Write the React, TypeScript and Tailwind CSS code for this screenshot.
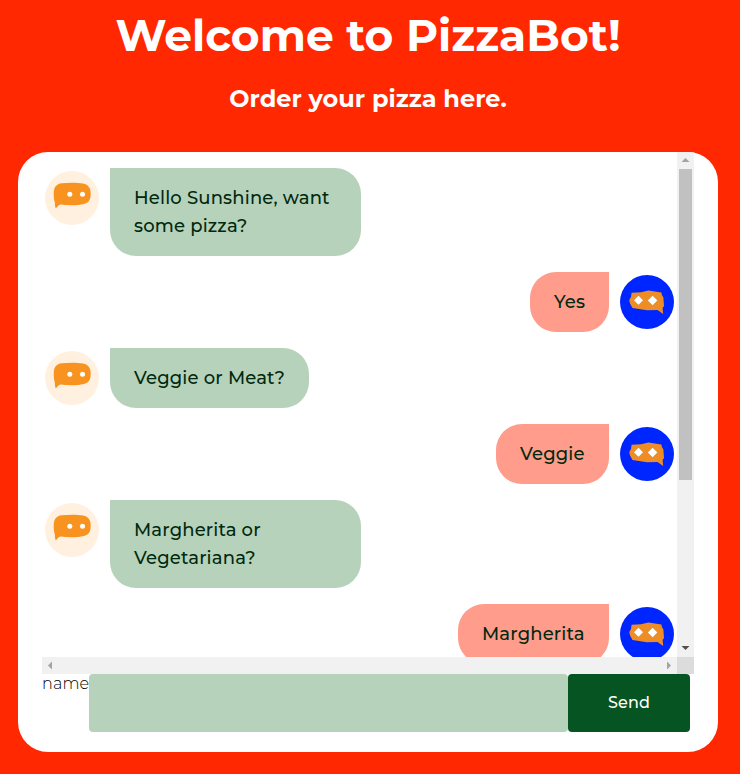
function BotAvatar() {
  return (
    <svg viewBox="0 0 60 60" className="size-[60px] shrink-0">
      <circle cx="30" cy="30" r="27" fill="#fff0e0" />
      <path
        d="M20 15.2C27 14.4 36 14.4 41 15.6C46.5 17 48.7 20 48.7 25.5C48.7 31 47.5 34.5 42 36C36 37.6 26 37.6 18.5 36.6C16.5 37 16 38.6 13.8 40.3C12.8 38.5 13 36.5 12.9 34.5C11.8 31.5 11.6 28 11.8 24.5C12 19.5 14 15.8 20 15.2Z"
        fill="#f7931e"
      />
      <circle cx="27.8" cy="26.2" r="2.5" fill="#fff" />
      <circle cx="40.5" cy="26.2" r="2.5" fill="#fff" />
    </svg>
  );
}

function UserAvatar() {
  return (
    <svg viewBox="0 0 60 60" className="size-[60px] shrink-0">
      <circle cx="30" cy="30" r="27" fill="#0026ff" />
      <path
        d="M14.6 20.8L24 20.2L31.5 18.6L44.4 20.6L44.9 23L46.4 25.4L47 34L45.6 36L46.2 42L40.5 37.9L30 38.2L15.5 36L13 31.5L12.3 28L14 25Z"
        fill="#ee8d26"
      />
      <path d="M21.5 23.8L26 28.3L21.5 32.8L17 28.3ZM35.6 23.8L40.3 28.5L35.6 33.2L30.9 28.5Z" fill="#fff" />
    </svg>
  );
}

type Message = { from: "bot" | "user"; text: string; width: string };

const messages: Message[] = [
  { from: "bot", text: "Hello Sunshine, want some pizza?", width: "w-[251px]" },
  { from: "user", text: "Yes", width: "w-[79px]" },
  { from: "bot", text: "Veggie or Meat?", width: "w-[199px]" },
  { from: "user", text: "Veggie", width: "w-[113px]" },
  { from: "bot", text: "Margherita or Vegetariana?", width: "w-[251px]" },
  { from: "user", text: "Margherita", width: "w-[151px]" },
];

function MessageRow({ message }: { message: Message }) {
  const bot = message.from === "bot";
  return (
    <div className={`flex shrink-0 items-start gap-2 ${bot ? "" : "flex-row-reverse"}`}>
      {bot ? <BotAvatar /> : <UserAvatar />}
      <p
        className={`py-4 pr-5 pl-6 text-[18px] leading-7 font-medium tracking-[0.17px] text-[#00290f] ${message.width} ${
          bot ? "rounded-[26px] rounded-tl-none bg-[#b7d2bb]" : "rounded-[26px] rounded-tr-none bg-[#ff9c8b]"
        }`}
      >
        {message.text}
      </p>
    </div>
  );
}

function Arrow({ points, color }: { points: string; color: string }) {
  return (
    <svg viewBox="0 0 17 17" className="size-[17px] shrink-0">
      <polygon points={points} fill={color} />
    </svg>
  );
}

export default function App() {
  return (
    <main className="h-[774px] w-[740px] overflow-hidden bg-[#ff2800] font-['Montserrat','Inter',sans-serif]">
      <header className="flex h-[152px] w-[736px] flex-col items-center text-white">
        <h1 className="mt-[5px] text-[44px] leading-[60px] font-bold">Welcome to PizzaBot!</h1>
        <h2 className="mt-[18px] text-[24px] leading-8 font-bold">Order your pizza here.</h2>
      </header>
      <section className="ml-[18px] h-[600px] w-[700px] overflow-hidden rounded-[30px] bg-white px-6">
        <div className="flex h-[505px]">
          <div className="flex w-[635px] flex-col gap-4 overflow-hidden pt-4">
            {messages.map((m, i) => (
              <MessageRow key={i} message={m} />
            ))}
          </div>
          <div className="flex w-[17px] flex-col items-center bg-[#f1f1f1]">
            <Arrow points="8.5,6 12.5,10 4.5,10" color="#a3a3a3" />
            <div className="h-[311px] w-[13px] bg-[#c1c1c1]" />
            <div className="grow" />
            <Arrow points="4.5,6 12.5,6 8.5,10" color="#505050" />
          </div>
        </div>
        <div className="flex h-[17px] bg-[#f1f1f1]">
          <Arrow points="10,4.5 10,12.5 6,8.5" color="#a3a3a3" />
          <div className="grow" />
          <Arrow points="7,4.5 11,8.5 7,12.5" color="#a3a3a3" />
          <div className="size-[17px] bg-[#dcdcdc]" />
        </div>
        <form className="flex h-[58px]" onSubmit={(e) => e.preventDefault()}>
          <label htmlFor="message" className="w-[47px] text-[16px] leading-5 font-light tracking-[0.15px] text-black">
            name
          </label>
          <input id="message" className="h-[58px] w-[479px] rounded-[4px] bg-[#b7d2bb] px-4 outline-none" />
          <button className="flex h-[58px] w-[122px] items-center justify-center rounded-[4px] bg-[#055422] text-[16px] font-medium tracking-[0.1px] text-white">
            Send
          </button>
        </form>
      </section>
    </main>
  );
}
